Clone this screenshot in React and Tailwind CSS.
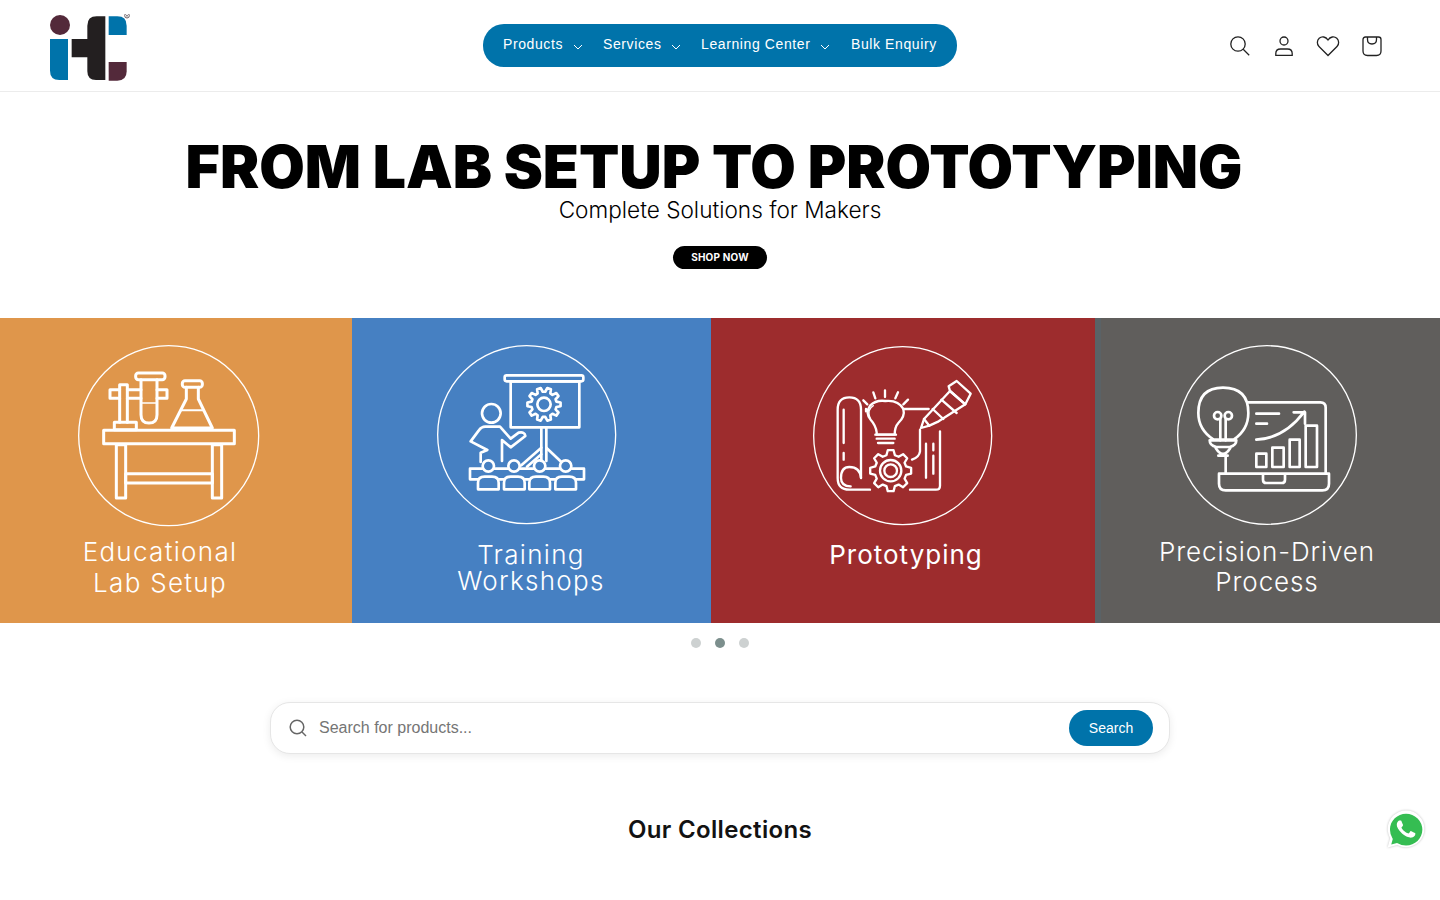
import React from "react";

const gearPath = (cx, cy, ro, ri, n) => {
  const pts = [];
  for (let i = 0; i < n; i++) {
    const a = (i / n) * Math.PI * 2;
    const s = (Math.PI * 2) / n;
    const p = (r, t) => `${(cx + r * Math.cos(t)).toFixed(1)} ${(cy + r * Math.sin(t)).toFixed(1)}`;
    pts.push(`${i === 0 ? "M" : "L"}${p(ri, a - s * 0.34)}`, `L${p(ro, a - s * 0.18)}`, `L${p(ro, a + s * 0.18)}`, `L${p(ri, a + s * 0.34)}`);
  }
  return pts.join(" ") + "Z";
};

function Logo() {
  return (
    <svg width="84" height="70" viewBox="60 40 252 210" className="block">
      <circle cx="90" cy="73" r="30" fill="#53293a" />
      <path d="M60 115H114V238H88Q60 238 60 210Z" fill="#0073aa" />
      <path d="M125 115H172V75Q172 47 200 47H226V238H198Q172 238 172 212V170H125Z" fill="#231f20" />
      <path d="M236 47H262Q290 47 290 75V103H236Z" fill="#0073aa" />
      <path d="M236 184H290V212Q290 240 262 240H236Z" fill="#53293a" />
      <circle cx="291" cy="45" r="7" fill="none" stroke="#6b6065" strokeWidth="3" />
      <circle cx="291" cy="45" r="2.5" fill="#6b6065" />
    </svg>
  );
}

function Chevron() {
  return (
    <svg width="10" height="6" viewBox="0 0 10 6" fill="none" className="block mt-[3px]">
      <path d="M1 1L5 5L9 1" stroke="#fff" strokeWidth="1" />
    </svg>
  );
}

function NavItem({ label, chevron, className }) {
  return (
    <div className={"flex items-center " + className}>
      <span className="text-[14px] leading-[20px] tracking-[0.6px] text-white whitespace-nowrap -mt-[2px]">{label}</span>
      {chevron && <span className="ml-[10px]"><Chevron /></span>}
    </div>
  );
}

function HeaderIcons() {
  return (
    <div className="flex justify-end">
      <div className="w-11 h-11 flex items-center justify-center">
        <svg width="22" height="22" viewBox="0 0 22 22" fill="none" stroke="#222" strokeWidth="1.3"><circle cx="9" cy="9" r="7.2" /><path d="M14.2 14.2L20.2 20.2" /></svg>
      </div>
      <div className="w-11 h-11 flex items-center justify-center">
        <svg width="22" height="22" viewBox="0 0 22 22" fill="none" stroke="#222" strokeWidth="1.3"><circle cx="11" cy="6" r="4" /><path d="M2.8 20.3V18.5C2.8 15.6 5 14 7.5 14H14.5C17 14 19.2 15.6 19.2 18.5V20.3Z" /></svg>
      </div>
      <div className="w-11 h-11 flex items-center justify-center">
        <svg width="24" height="22" viewBox="0 0 24 22" fill="none" stroke="#222" strokeWidth="1.3"><path d="M12 20.5L3 11.5C0.6 9 1 5.3 3.2 3.3C5.8 1 9.8 1.6 12 5C14.2 1.6 18.2 1 20.8 3.3C23 5.3 23.4 9 21 11.5Z" /></svg>
      </div>
      <div className="w-11 h-11 flex items-center justify-center">
        <svg width="22" height="22" viewBox="0 0 22 22" fill="none" stroke="#222" strokeWidth="1.3"><path d="M2 4.5Q2 2 4.5 2H17.5Q20 2 20 4.5V16Q20 20.5 15.5 20.5H6.5Q2 20.5 2 16Z" /><path d="M6.5 2V4.5Q6.5 9 11 9Q15.5 9 15.5 4.5V2" /></svg>
      </div>
    </div>
  );
}

function LabIcon() {
  return (
    <svg width="184" height="184" viewBox="232 73 552 552" fill="none" stroke="#fff" strokeWidth="9" strokeLinejoin="round" strokeLinecap="round" className="block">
      <circle cx="507" cy="348" r="270" strokeWidth="4" />
      <rect x="312" y="332" width="392" height="40" />
      <rect x="350" y="375" width="28" height="160" />
      <rect x="638" y="375" width="28" height="160" />
      <rect x="378" y="462" width="260" height="28" />
      <rect x="344" y="308" width="66" height="22" />
      <path d="M360 308V195H383V308" />
      <path d="M360 210H331V236H360M383 210H424M383 236H424M472 210H502V236H472" />
      <rect x="408" y="160" width="88" height="20" rx="8" />
      <path d="M424 180V285Q424 310 448 310Q472 310 472 285V180" />
      <path d="M428 250H468" strokeWidth="5" />
      <rect x="548" y="183" width="60" height="20" rx="8" />
      <path d="M560 203V238L516 325H638L596 238V203" />
      <path d="M545 272H610" strokeWidth="6" />
    </svg>
  );
}

function WorkshopIcon() {
  return (
    <svg width="180" height="180" viewBox="255 77 540 540" fill="none" stroke="#fff" strokeWidth="8" strokeLinejoin="round" strokeLinecap="round" className="block">
      <circle cx="524" cy="346" r="267" strokeWidth="4" />
      <rect x="458" y="168" width="236" height="18" rx="6" />
      <rect x="476" y="186" width="206" height="138" />
      <path d={gearPath(576, 255, 50, 38, 10)} />
      <circle cx="576" cy="255" r="20" />
      <path d="M568 324V425M583 324V425" />
      <path d="M568 385L508 438M583 385L628 428M568 405L525 442" />
      <circle cx="418" cy="282" r="28" />
      <path d="M450 425V362L476 384L520 350Q518 336 500 340L476 358L444 322H400Q388 322 380 334L356 366L406 392L386 400V428" />
      <circle cx="409" cy="440" r="17" />
      <circle cx="486" cy="440" r="17" />
      <circle cx="563" cy="440" r="17" />
      <circle cx="641" cy="440" r="17" />
      <path d="M390 448H354V480H378M440 480H456M518 480H532M594 480H610M672 480H696V448H660M428 448H468M505 448H544M582 448H622" />
      <path d="M378 510V490Q378 472 398 472H420Q440 472 440 490V510Z" />
      <path d="M456 510V490Q456 472 476 472H498Q518 472 518 490V510Z" />
      <path d="M532 510V490Q532 472 552 472H574Q594 472 594 490V510Z" />
      <path d="M610 510V490Q610 472 630 472H652Q672 472 672 490V510Z" />
    </svg>
  );
}

function ProtoIcon() {
  return (
    <svg width="180" height="180" viewBox="249 79 540 540" fill="none" stroke="#fff" strokeWidth="7" strokeLinejoin="round" strokeLinecap="round" className="block">
      <circle cx="518" cy="348" r="267" strokeWidth="4" />
      <path d="M393 475V270Q393 233 358 233Q323 233 323 270V475Q323 510 358 510H420M540 510H618Q630 510 630 498V335" />
      <path d="M393 475Q390 442 358 442Q333 442 333 475Q333 500 362 500" />
      <path d="M341 270V370M341 400V420" />
      <path d="M520 268H596M408 268V275" />
      <path d="M440 345V338Q438 318 422 300Q405 280 420 258Q438 240 466 244Q505 240 520 268Q526 290 505 310Q494 322 494 345Z" />
      <path d="M436 345H498M440 357H494M444 370H490" />
      <path d="M420 295Q410 270 430 258" strokeWidth="4" />
      <path d="M400 242L412 254M430 218L436 236M465 212V232M504 218L496 236M534 240L520 254" />
      <path d={gearPath(482, 453, 62, 48, 8)} />
      <circle cx="482" cy="453" r="32" />
      <circle cx="482" cy="453" r="19" />
      <path d="M570 330V395Q568 412 546 420" />
      <path d="M573 325L582 298L660 214L706 254L626 305L598 318Z" />
      <path d="M582 298L598 318M608 268L640 298M634 240L680 280" />
      <path d="M656 200L680 184L722 222L706 254L660 214Z" />
      <path d="M588 372V474M610 372V392M610 408V462" />
    </svg>
  );
}

function PrecisionIcon() {
  return (
    <svg width="180" height="180" viewBox="262 76 540 540" fill="none" stroke="#fff" strokeWidth="8" strokeLinejoin="round" strokeLinecap="round" className="block">
      <circle cx="532" cy="346" r="268" strokeWidth="4" />
      <path d="M372 360Q326 330 326 280Q326 204 400 204Q476 204 476 280Q476 330 432 360Z" />
      <path d="M360 362H440Q440 378 420 382H380Q360 378 360 362Z" />
      <path d="M378 385Q400 420 422 385M386 408H414" />
      <circle cx="384" cy="288" r="11" />
      <circle cx="416" cy="288" r="11" />
      <path d="M392 298V362M408 298V362" />
      <path d="M476 248H692Q708 248 708 264V462" />
      <path d="M408 412V462" />
      <path d="M388 462H718V492Q718 512 698 512H408Q388 512 388 492Z" />
      <path d="M520 466V480Q520 490 530 490H576Q586 490 586 480V466" />
      <path d="M500 282H568M500 312H532" />
      <path d="M500 360Q584 356 644 276M612 278H646V312" />
      <rect x="500" y="402" width="30" height="40" />
      <rect x="548" y="384" width="34" height="58" />
      <rect x="600" y="360" width="30" height="82" />
      <rect x="648" y="318" width="34" height="124" />
    </svg>
  );
}

function Panel1() {
  return (
    <div className="w-[352px] h-full bg-[#df964b] shrink-0 pt-[26px]">
      <div className="ml-[77px]"><LabIcon /></div>
      <div className="w-[320px] text-center text-white font-['Inter',sans-serif] font-light text-[26px] leading-[31px] tracking-[1.3px] mt-[8px]">
        <div>Educational</div>
        <div>Lab Setup</div>
      </div>
    </div>
  );
}

function Panel2() {
  return (
    <div className="w-[359px] h-full bg-[#4680c2] shrink-0 pt-[27px]">
      <div className="ml-[85px]"><WorkshopIcon /></div>
      <div className="w-[358px] text-center text-white font-['Inter',sans-serif] font-light text-[26px] leading-[26px] tracking-[1.3px] mt-[17px]">
        <div>Training</div>
        <div>Workshops</div>
      </div>
    </div>
  );
}

function Panel3() {
  return (
    <div className="w-[384px] h-full bg-[#9d2c2d] shrink-0 pt-[28px]">
      <div className="ml-[102px]"><ProtoIcon /></div>
      <div className="w-[390px] text-center text-white font-['Inter',sans-serif] font-normal text-[26px] leading-[30px] tracking-[1px] mt-[14px]">
        Prototyping
      </div>
    </div>
  );
}

function Panel4() {
  return (
    <div className="w-[345px] h-full bg-[#605e5c] shrink-0 pt-[27px] border-l-[6px] border-[#5a6266]">
      <div className="ml-[76px]"><PrecisionIcon /></div>
      <div className="w-[332px] text-center text-white font-['Inter',sans-serif] font-light text-[26px] leading-[30px] tracking-[0.9px] mt-[12px]">
        <div>Precision-Driven</div>
        <div>Process</div>
      </div>
    </div>
  );
}

function WhatsApp() {
  return (
    <div className="absolute left-[1386px] top-[808px] w-10 h-[42px]">
      <svg viewBox="-1 -1 26 26" width="40" height="42" className="block drop-shadow-[0_0_1px_rgba(0,0,0,0.25)]">
        <path fill="#fff" d="M20.464 3.488A11.815 11.815 0 0012.05 0C5.495 0 .16 5.335.157 11.892c0 2.096.547 4.142 1.588 5.945L.057 24l6.305-1.654a11.882 11.882 0 005.683 1.448h.005c6.554 0 11.89-5.335 11.893-11.893a11.821 11.821 0 00-3.48-8.413z" />
        <path fill="#35bd52" d="M12.051 22.785h-.004a10.87 10.87 0 01-5.531-1.478l-.361-.214-3.741.982.998-3.648-.235-.374a10.86 10.86 0 01-1.61-5.66c.001-5.95 4.836-10.384 10.488-10.384 2.84 0 5.322 1.03 7.488 3.098a10.825 10.825 0 013.093 7.294c-.003 5.95-4.837 10.384-10.585 10.384" />
        <path fill="#fff" d="M17.472 14.382c-.297-.149-1.758-.867-2.03-.967-.273-.099-.471-.148-.67.15-.197.297-.767.966-.94 1.164-.173.199-.347.223-.644.075-.297-.15-1.255-.463-2.39-1.475-.883-.788-1.48-1.761-1.653-2.059-.173-.297-.018-.458.13-.606.134-.133.298-.347.446-.52.149-.174.198-.298.298-.497.099-.198.05-.371-.025-.52-.075-.149-.669-1.612-.916-2.207-.242-.579-.487-.5-.669-.51-.173-.008-.371-.01-.57-.01-.198 0-.52.074-.792.372-.272.297-1.04 1.016-1.04 2.479 0 1.462 1.065 2.875 1.213 3.074.149.198 2.096 3.2 5.077 4.487.709.306 1.262.489 1.694.625.712.227 1.36.195 1.871.118.571-.085 1.758-.719 2.006-1.413.248-.694.248-1.289.173-1.413-.074-.124-.272-.198-.57-.347" />
      </svg>
    </div>
  );
}

export default function App() {
  return (
    <div className="relative w-full h-[900px] overflow-hidden bg-white font-['Liberation_Sans',Arial,sans-serif]">
      <header className="h-[92px] border-b border-[#ececec] px-[46px] grid grid-cols-[1fr_auto_1fr] items-center">
        <div className="ml-[4px] mt-[6px]"><Logo /></div>
        <nav className="h-[43px] w-[474px] -mt-[1px] rounded-[21px] bg-[#0073aa] pl-[20px] flex items-center">
          <NavItem label="Products" chevron className="w-[100px]" />
          <NavItem label="Services" chevron className="w-[98px]" />
          <NavItem label="Learning Center" chevron className="w-[150px]" />
          <NavItem label="Bulk Enquiry" />
        </nav>
        <HeaderIcons />
      </header>

      <section className="h-[226px] flex flex-col items-center pt-[50px]">
        <h1 className="-ml-[12px] font-['Inter',sans-serif] font-black text-[58.8px] leading-[50px] text-black whitespace-nowrap">FROM LAB SETUP TO PROTOTYPING</h1>
        <p className="font-['Inter',sans-serif] font-light text-[22.6px] leading-[28px] text-black mt-[4px]">Complete Solutions for Makers</p>
        <div className="mt-[22px] w-[94px] h-[23px] rounded-full bg-black flex items-center justify-center text-white font-['Inter',sans-serif] font-bold text-[10px] tracking-[0.2px]">SHOP NOW</div>
      </section>

      <section className="flex h-[305px]">
        <Panel1 />
        <Panel2 />
        <Panel3 />
        <Panel4 />
      </section>

      <div className="flex justify-center gap-[14px] mt-[15px]">
        <span className="w-[10px] h-[10px] rounded-full bg-[#cdd1d1]" />
        <span className="w-[10px] h-[10px] rounded-full bg-[#7c8f8d]" />
        <span className="w-[10px] h-[10px] rounded-full bg-[#cdd1d1]" />
      </div>

      <div className="mx-auto mt-[54px] w-[900px] h-[52px] rounded-[20px] border border-[#e6e6e6] bg-white shadow-[0_2px_8px_rgba(0,0,0,0.08)] flex items-center pl-[18px] pr-[16px]">
        <svg width="18" height="18" viewBox="0 0 18 18" fill="none" stroke="#666" strokeWidth="1.5" className="shrink-0"><circle cx="8" cy="8" r="6.8" /><path d="M13 13L17 17" /></svg>
        <input readOnly placeholder="Search for products..." className="flex-1 ml-[12px] h-full bg-transparent outline-none text-[16px] text-[#555] placeholder:text-[#757575]" />
        <button className="w-[84px] h-[36px] rounded-[18px] bg-[#0073aa] text-white text-[14px]">Search</button>
      </div>

      <h2 className="mt-[59px] text-center font-['Inter',sans-serif] font-semibold text-[24px] tracking-[0.35px] leading-[34px] text-[#121212]">Our Collections</h2>

      <WhatsApp />
    </div>
  );
}
